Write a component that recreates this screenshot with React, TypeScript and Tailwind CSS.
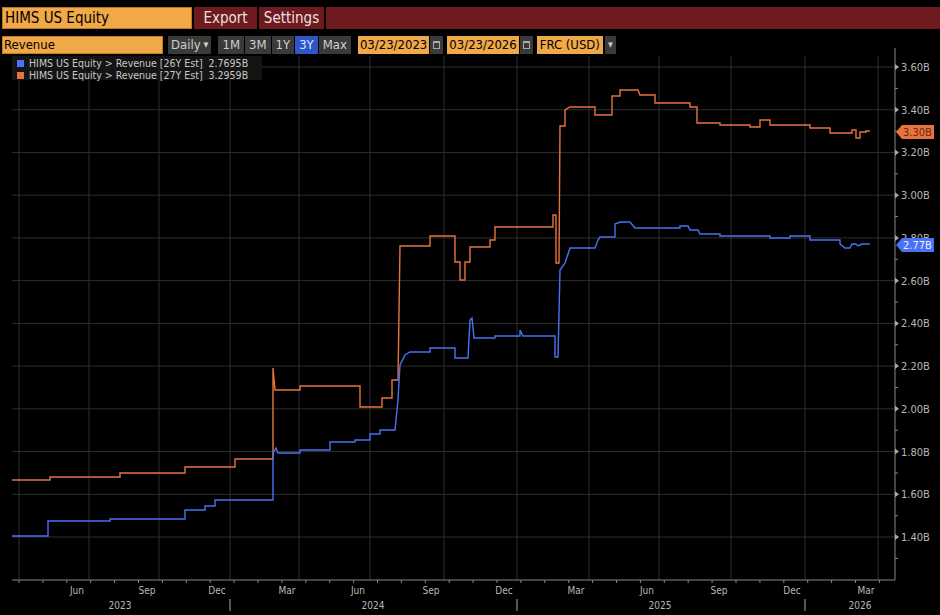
const F = { fontFamily: '"DejaVu Sans Condensed","Liberation Sans",sans-serif' };

const orangePts: [number, number][] = [
  [12,480],[50,480],[50,477],[120,477],[120,473],[185,473],[185,467],[235,467],[235,459],[273,459],[273,368],[275,390],[300,390],[300,386],[360,386],[360,407],[382,407],[382,398],[392,398],[392,380],[398,380],[400,246],[430,246],[430,236],[455,236],[455,262],[460,262],[460,280],[465,280],[465,262],[470,262],[470,247],[490,247],[490,240],[495,240],[495,227],[553,227],[553,215],[556,215],[556,263],[559,263],[560,126],[565,126],[565,110],[570,107],[595,107],[595,115],[612,115],[612,96],[620,96],[620,90],[638,90],[640,95],[655,95],[655,103],[690,103],[690,107],[697,107],[697,123],[720,123],[720,125],[750,125],[750,127],[760,127],[760,120],[770,120],[770,125],[810,125],[810,128],[830,128],[830,133],[852,133],[852,130],[856,130],[856,138],[860,138],[860,132],[866,132],[866,131],[870,131]
];
const bluePts: [number, number][] = [
  [12,536],[48,536],[48,521],[110,521],[110,519],[185,519],[185,510],[205,510],[205,506],[215,506],[215,500],[273,500],[273,453],[276,448],[278,453],[300,453],[300,450],[330,450],[330,442],[355,442],[355,440],[370,440],[370,434],[380,434],[380,430],[395,430],[398,400],[400,365],[405,355],[410,352],[430,352],[430,348],[455,348],[455,358],[468,358],[470,320],[472,318],[474,338],[495,338],[495,336],[520,336],[520,330],[523,336],[555,336],[555,357],[558,357],[560,270],[565,263],[570,248],[595,248],[598,240],[600,237],[615,237],[615,224],[620,222],[630,222],[635,228],[680,228],[680,226],[688,226],[690,230],[698,230],[700,234],[720,234],[720,236],[770,236],[770,238],[790,238],[790,236],[810,236],[810,240],[840,240],[840,244],[845,248],[850,248],[852,244],[856,244],[858,246],[862,244],[870,244]
];
const toPath = (p: [number, number][]) => p.map((q, i) => (i ? 'L' : 'M') + q[0] + ' ' + q[1]).join(' ');

const yLabels = ['3.60B','3.40B','3.20B','3.00B','2.80B','2.60B','2.40B','2.20B','2.00B','1.80B','1.60B','1.40B'];
const yOf = (i: number) => 67 + i * 42.73;
const vGrid = [19, 89, 159, 230, 299, 370, 444, 517, 589, 659, 731, 805, 878];
const months: [string, number][] = [['Jun',77],['Sep',147],['Dec',217],['Mar',287],['Jun',358],['Sep',431],['Dec',504],['Mar',576],['Jun',647],['Sep',719],['Dec',792],['Mar',866]];

function Btn({ t, active }: { t: string; active?: boolean }) {
  return <div className={`h-[18px] px-[4px] flex items-center ${active ? 'bg-[#2f56c6] text-[#dfe6ff]' : 'bg-[#3a3a3a] text-[#cfcfcf]'}`}>{t}</div>;
}
function Cal() {
  return <div className="h-[18px] w-[13px] bg-[#3a3a3a] flex items-center justify-center"><div className="w-[7px] h-[8px] border border-[#aaa] border-t-2"></div></div>;
}

export default function App() {
  return (
    <div className="w-[940px] h-[615px] bg-black overflow-hidden relative" style={F}>
      <div className="pt-[7px] flex h-[29px]">
        <div className="w-[190px] ml-[2px] h-[22px] bg-[#f0a848] border border-[#c07a20] text-black text-[15px] leading-[20px] pl-[2px]">HIMS US Equity</div>
        <div className="ml-[2px] w-[63px] bg-[#6e1a1f] text-[#e8e0e0] text-[15px] flex items-center justify-center">Export</div>
        <div className="ml-[2px] w-[65px] bg-[#6e1a1f] text-[#e8e0e0] text-[15px] flex items-center justify-center">Settings</div>
        <div className="ml-[2px] flex-1 bg-[#6e1a1f]"></div>
      </div>
      <div className="flex items-center mt-[7px] text-[13px] gap-[1px]">
        <div className="w-[161px] ml-[2px] h-[18px] bg-[#f0a848] border border-[#c07a20] text-black leading-[16px] pl-[1px]">Revenue</div>
        <div className="ml-[4px] h-[18px] px-[3px] bg-[#3a3a3a] text-[#cfcfcf] flex items-center">Daily <span className="text-[7px] ml-[3px]">▼</span></div>
        <div className="ml-[6px] flex gap-[1px]"><Btn t="1M" /><Btn t="3M" /><Btn t="1Y" /><Btn t="3Y" active /><Btn t="Max" /></div>
        <div className="ml-[6px] h-[18px] px-[2px] bg-[#f0a848] text-black flex items-center">03/23/2023</div>
        <Cal />
        <div className="ml-[3px] h-[18px] px-[2px] bg-[#f0a848] text-black flex items-center">03/23/2026</div>
        <Cal />
        <div className="ml-[3px] h-[18px] px-[3px] bg-[#f0a848] text-black flex items-center">FRC (USD)</div>
        <div className="ml-[1px] h-[18px] w-[11px] bg-[#3a3a3a] text-[#ccc] text-[7px] flex items-center justify-center">▼</div>
      </div>
      <svg className="absolute left-0 top-[45px]" width="940" height="570" viewBox="0 45 940 570">
        {yLabels.map((_, i) => <line key={i} x1={12} x2={895} y1={yOf(i)} y2={yOf(i)} stroke="#2e2e2e" />)}
        {vGrid.map((x, i) => <line key={i} x1={x} x2={x} y1={56} y2={580} stroke="#2e2e2e" />)}
        <line x1={895} x2={895} y1={48} y2={580} stroke="#888" />
        <line x1={12} x2={895} y1={580} y2={580} stroke="#888" />
        {yLabels.map((l, i) => (
          <g key={l}>
            <path d={`M895 ${yOf(i) - 3} L899 ${yOf(i)} L895 ${yOf(i) + 3}Z`} fill="#aaa" />
            <line x1={895} x2={898} y1={yOf(i) + 21.4} y2={yOf(i) + 21.4} stroke="#888" />
            <text x={901} y={yOf(i) + 4} fill="#b8b8b8" fontSize="11" style={F}>{l}</text>
          </g>
        ))}
        {Array.from({ length: 37 }).map((_, i) => <line key={i} x1={19 + i * 23.9} x2={19 + i * 23.9} y1={580} y2={583} stroke="#888" />)}
        {months.map(([m, x], i) => <text key={i} x={x} y={594} fill="#b8b8b8" fontSize="10" textAnchor="middle" style={F}>{m}</text>)}
        {[['2023',120],['2024',373],['2025',660],['2026',860]].map(([y, x]) => <text key={y} x={x} y={609} fill="#b8b8b8" fontSize="10" textAnchor="middle" style={F}>{y}</text>)}
        {[230, 517, 805].map(x => <line key={x} x1={x} x2={x} y1={599} y2={611} stroke="#aaa" />)}
        <path d={toPath(orangePts)} fill="none" stroke="#e8733f" strokeWidth="1.4" />
        <path d={toPath(bluePts)} fill="none" stroke="#4a72f5" strokeWidth="1.4" />
        <path d="M896 132 L902 125 L934 125 L934 139 L902 139Z" fill="#e8733f" />
        <text x={903} y={136} fill="#6e2410" fontSize="11" style={F}>3.30B</text>
        <path d="M896 245 L902 238 L934 238 L934 252 L902 252Z" fill="#4a72f5" />
        <text x={903} y={249} fill="#eef" fontSize="11" style={F}>2.77B</text>
      </svg>
      <div className="absolute left-[12px] top-[56px] w-[250px] h-[24px] bg-[#141414] text-[#c8c8c8] text-[10.5px] leading-[12px] pl-[5px] pt-[1px]">
        <div className="flex items-center"><span className="w-[7px] h-[7px] bg-[#4a72f5] mr-[5px]"></span>HIMS US Equity &gt; Revenue [26Y Est]&nbsp; 2.7695B</div>
        <div className="flex items-center"><span className="w-[7px] h-[7px] bg-[#e8733f] mr-[5px]"></span>HIMS US Equity &gt; Revenue [27Y Est]&nbsp; 3.2959B</div>
      </div>
    </div>
  );
}
